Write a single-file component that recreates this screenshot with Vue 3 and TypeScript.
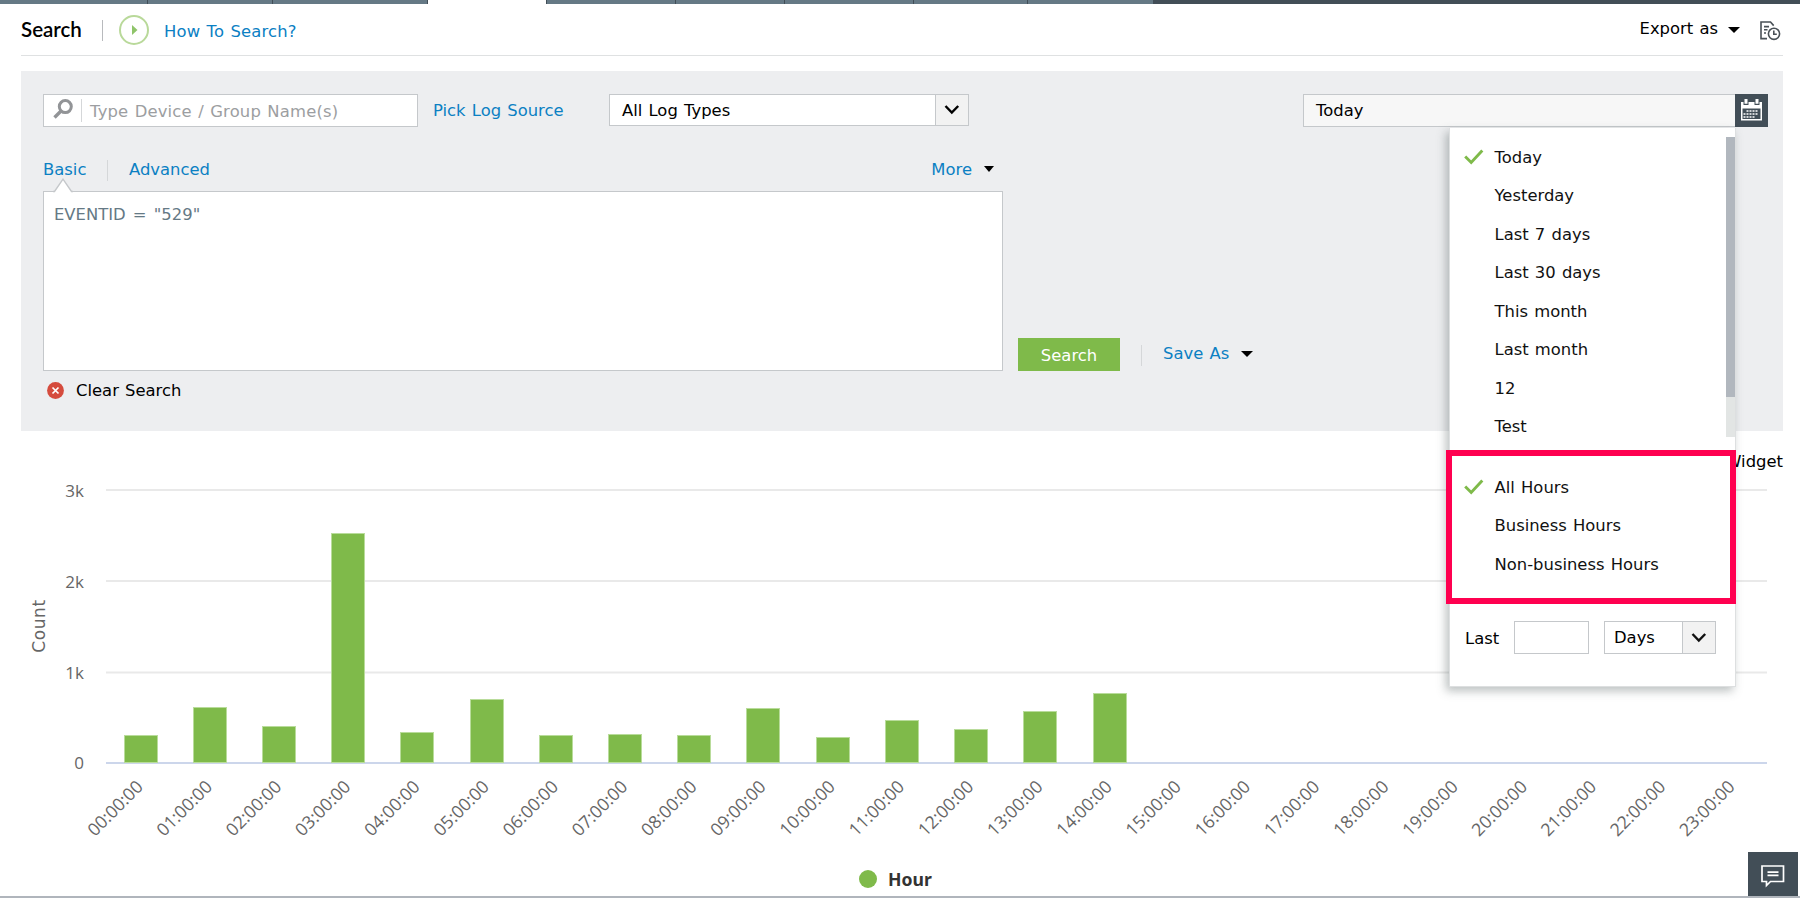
<script setup lang="ts">
import { computed, ref } from 'vue'
interface Bar {
  label: string
  height: number
}
const tabs = [148, 125, 155, 119, 129, 109, 129, 114, 126]
const activeTab = 3
const ranges = ['Today', 'Yesterday', 'Last 7 days', 'Last 30 days', 'This month', 'Last month', '12', 'Test']
const hours = ['All Hours', 'Business Hours', 'Non-business Hours']
const range = ref('Today')
const hour = ref('All Hours')
const query = ref('EVENTID = "529"')
const heights = [28, 56, 37, 230, 31, 64, 28, 29, 28, 55, 26, 43, 34, 52, 70]
const bars = computed<Bar[]>(() =>
  Array.from({ length: 24 }, (_, i) => ({
    label: `${String(i).padStart(2, '0')}:00:00`,
    height: heights[i] ?? 0
  }))
)
const grid = [
  { label: '3k', y: 30 },
  { label: '2k', y: 121 },
  { label: '1k', y: 212.5 }
]
const slot = 1661 / 24
const barX = (i: number) => Math.round(106 + slot * i + 17.6)
const labelX = (i: number) => 106 + slot * (i + 0.5) + 3.5
</script>
<template>
  <div class="page">
    <nav class="tabs">
      <span
        v-for="(w, i) in tabs"
        :key="i"
        class="tab"
        :class="{ active: i === activeTab }"
        :style="{ width: w + 'px' }"
      />
    </nav>
    <header class="head">
      <h1>Search</h1>
      <span class="sep" />
      <svg class="play" width="30" height="30" viewBox="0 0 30 30">
        <circle cx="15" cy="15" r="14" fill="#fff" stroke="#b9d99a" stroke-width="2" />
        <path d="M13 10l5.5 5-5.5 5z" fill="#8fc46a" />
      </svg>
      <a class="how">How To Search?</a>
      <span class="export">Export as</span>
      <span class="caret big" />
      <svg class="report" width="21" height="20" viewBox="0 0 21 20" fill="none" stroke="#4a5157" stroke-width="1.6">
        <path d="M7 17.6H1V1h9.5l3.2 3.6" />
        <path d="M4 5.6h5M4 8.8h3.5M4 12h2" />
        <circle cx="14" cy="12.8" r="5.6" />
        <path d="M13.8 9.6v3.6h3" />
      </svg>
    </header>
    <section class="panel">
      <div class="filters">
        <div class="device">
          <svg width="20" height="20" viewBox="0 0 20 20" fill="none" stroke="#929497">
            <circle cx="12.3" cy="7.6" r="6" stroke-width="3" />
            <path d="M8 12l-6.5 6.5" stroke-width="3.4" />
          </svg>
          <span class="bar-sep" />
          <span class="hint">Type Device / Group Name(s)</span>
        </div>
        <a class="pick">Pick Log Source</a>
        <div class="select types">
          <span class="value">All Log Types</span>
          <span class="arrow">
            <svg width="16" height="12" viewBox="0 0 16 12" fill="none" stroke="#000" stroke-width="2.4"><path d="M1.5 2l6.3 6.6L14.2 2" /></svg>
          </span>
        </div>
        <div class="date">
          <span class="value">{{ range }}</span>
          <span class="calendar">
            <svg width="21" height="22" viewBox="0 0 21 22">
              <path d="M0 3h21v18.5H0z" fill="#fff" />
              <path d="M1.5 9.5h18v10.5h-18z" fill="#424e57" />
              <path d="M2.5 0h5v6h-5zM13.5 0h5v6h-5z" fill="#424e57" />
              <path d="M3.5 0h3v4.7h-3zM14.5 0h3v4.7h-3z" fill="#fff" />
              <path d="M5.500 12h12M2.500 15h15M2.500 18h12" stroke="#fff" stroke-width="1.700" stroke-dasharray="2 1" />
            </svg>
          </span>
        </div>
      </div>
      <div class="modes">
        <a class="basic">Basic</a>
        <span class="mode-sep" />
        <a class="advanced">Advanced</a>
        <a class="more">More</a>
        <span class="caret" />
      </div>
      <div class="editor">
        <div class="query">
          <svg class="notch" width="20" height="15" viewBox="0 0 20 15">
            <path d="M1 14L10 1.2 19 14v1H1z" fill="#fff" />
            <path d="M0 13.5h1.5L10 1.2l8.5 12.3H20" fill="none" stroke="#c5c8cb" stroke-width="1.4" />
          </svg>
          {{ query }}
        </div>
        <button class="go">Search</button>
        <span class="save-sep" />
        <a class="save">Save As</a>
        <span class="caret big" />
      </div>
      <div class="clear">
        <svg width="17" height="17" viewBox="0 0 17 17">
          <circle cx="8.5" cy="8.5" r="8.4" fill="#d54b3d" />
          <path d="M5.5 5.5l6 6M11.5 5.5l-6 6" stroke="#fff" stroke-width="1.7" />
        </svg>
        <span>Clear Search</span>
      </div>
    </section>
    <div class="widget">Widget</div>
    <svg class="chart" width="1800" height="408" viewBox="0 0 1800 408">
      <g v-for="g in grid" :key="g.label">
        <rect x="106" :y="g.y - 1" width="1661" height="2" fill="#e9e9e9" />
        <text class="tick" x="84" :y="g.y + 6.5" text-anchor="end">{{ g.label }}</text>
      </g>
      <text class="tick" x="84" y="309" text-anchor="end">0</text>
      <rect x="106" y="302" width="1661" height="2" fill="#ccd6eb" />
      <text class="axis" transform="translate(45 166) rotate(-90)" text-anchor="middle">Count</text>
      <g v-for="(b, i) in bars" :key="b.label">
        <rect v-if="b.height" :x="barX(i) + 0.5" :y="303.5 - b.height" width="33" :height="b.height - 1" fill="#7fba4a" stroke="#b9dc9b" />
        <text class="tick hour" :transform="`translate(${labelX(i)} 328) rotate(-45)`" text-anchor="end">{{ b.label }}</text>
      </g>
    </svg>
    <footer class="legend">
      <span class="dot" />
      <span>Hour</span>
    </footer>
    <div class="menu">
      <div class="ranges">
        <div v-for="r in ranges" :key="r" class="item" @click="range = r">
          <svg v-if="r === range" class="tick-mark" width="20" height="16" viewBox="0 0 20 16"><path d="M1.2 7.5l6 6L18.3 1.5" /></svg>
          {{ r }}
        </div>
        <span class="track"><span class="thumb" /></span>
      </div>
      <div class="hours">
        <div v-for="h in hours" :key="h" class="item" @click="hour = h">
          <svg v-if="h === hour" class="tick-mark" width="20" height="16" viewBox="0 0 20 16"><path d="M1.2 7.5l6 6L18.3 1.5" /></svg>
          {{ h }}
        </div>
      </div>
      <div class="last">
        <span class="last-label">Last</span>
        <span class="amount" />
        <div class="select unit">
          <span class="value">Days</span>
          <span class="arrow">
            <svg width="16" height="12" viewBox="0 0 16 12" fill="none" stroke="#111" stroke-width="2.4"><path d="M1.5 2l6.3 6.6L14.2 2" /></svg>
          </span>
        </div>
      </div>
    </div>
    <div class="chat">
      <svg width="24" height="23" viewBox="0 0 24 23" fill="none" stroke="#fff" stroke-width="1.7">
        <path d="M1 1h21.500v15.500H9.500l-4 4v-4H1z" />
        <path d="M6.500 7.200h11M6.500 10.400h11" />
      </svg>
    </div>
  </div>
</template>

<style>
body {
  margin: 0;
  background: #fff;
}
</style>

<style scoped>
.page {
  position: relative;
  display: flex;
  flex-direction: column;
  box-sizing: border-box;
  width: 1800px;
  height: 898px;
  overflow: hidden;
  border-bottom: 2px solid #b0b5bc;
  font: 16.4px/20px "DejaVu Sans", Verdana, sans-serif;
  word-spacing: 1px;
  color: #000;
  white-space: nowrap;
}

a {
  color: #0b80c3;
}

.tabs {
  display: flex;
  flex: none;
  height: 4px;
  background: #424e57;
}

.tab {
  box-sizing: border-box;
  background: #657985;
  border-right: 1px solid #424e57;
}

.tab.active {
  background: #fff;
}

.head {
  display: flex;
  flex: none;
  align-items: flex-start;
  box-sizing: border-box;
  height: 52px;
  margin: 0 17px 0 21px;
  border-bottom: 1px solid #dfe1e2;
}

h1 {
  width: 81px;
  margin: 13px 0 0;
  font: 600 20.5px/24px Lato, sans-serif;
}

.sep {
  width: 1px;
  height: 21px;
  margin-top: 16px;
  background: #b8babd;
}

.play {
  margin: 11px 15px 0 16px;
}

.how {
  margin-top: 18px;
  letter-spacing: 0.15px;
}

.export {
  margin: 15px 10px 0 auto;
}

.caret {
  width: 0;
  height: 0;
  border: 5.5px solid transparent;
  border-top: 6px solid #000;
  border-bottom: 0;
}

.caret.big {
  border-width: 6.5px 6px 0;
}

.head .caret {
  margin-top: 23px;
}

.report {
  margin: 17px 2px 0 20px;
}

.panel {
  flex: none;
  box-sizing: border-box;
  height: 360px;
  margin: 15px 17px 0 21px;
  padding: 23px 15px 0 22px;
  background: #edeef0;
}

.filters {
  display: flex;
  height: 33px;
}

.device {
  display: flex;
  align-items: center;
  box-sizing: border-box;
  width: 375px;
  padding: 0 0 0 9px;
  background: #fff;
  border: 1px solid #c5c8cb;
}

.device svg {
  margin-top: -3px;
}

.bar-sep {
  width: 1px;
  height: 23px;
  margin: 0 8px;
  background: #d5d7d9;
}

.hint {
  padding-top: 2px;
  letter-spacing: 0.17px;
  color: #9c9ea1;
}

.pick {
  width: 176px;
  padding: 7px 0 0 15px;
  box-sizing: border-box;
}

.select {
  display: flex;
  box-sizing: border-box;
  background: #fff;
  border: 1px solid #c5c8cb;
}

.types {
  width: 360px;
  height: 32px;
  margin-left: 15px;
}

.select .value {
  flex: 1;
  padding: 6px 0 0 12px;
}

.arrow {
  display: flex;
  align-items: center;
  justify-content: center;
  width: 32px;
  background: #f2f2f2;
  border-left: 1px solid #c5c8cb;
}

.date {
  display: flex;
  width: 465px;
  margin-left: auto;
}

.date .value {
  flex: 1;
  padding: 6px 0 0 12px;
  background: #f7f7f7;
  border: 1px solid #c5c8cb;
  border-right: 0;
}

.calendar {
  display: flex;
  justify-content: center;
  width: 33px;
  padding-top: 5px;
  box-sizing: border-box;
  background: #424e57;
}

.modes {
  display: flex;
  align-items: flex-start;
  height: 64px;
}

.modes a {
  margin-top: 33px;
}

.basic {
  width: 64px;
}

.mode-sep,
.save-sep {
  width: 1px;
  height: 21px;
  background: #d5d7d9;
}

.mode-sep {
  margin: 33px 21px 0 0;
}

.modes .more {
  margin-left: auto;
}

.modes .caret {
  margin: 39px 774px 0 12px;
}

.editor {
  display: flex;
  align-items: flex-start;
  height: 180px;
}

.query {
  position: relative;
  box-sizing: border-box;
  width: 960px;
  height: 180px;
  padding: 13px 11px 0 10px;
  word-spacing: 2px;
  color: #657985;
  background: #fff;
  border: 1px solid #c5c8cb;
}

.notch {
  position: absolute;
  top: -14px;
  left: 9px;
}

.go {
  width: 102px;
  height: 33px;
  margin: 147px 21px 0 15px;
  padding: 2px 0 0;
  font: inherit;
  color: #fff;
  background: #7fba4a;
  border: 0;
}

.save-sep {
  margin-top: 154px;
}

.save {
  margin: 153px 12px 0 21px;
}

.editor .caret {
  margin-top: 160px;
}

.clear {
  display: flex;
  align-items: center;
  gap: 12px;
  margin: 10px 0 0 4px;
}

.clear svg {
  margin-top: -1px;
}

.widget {
  flex: none;
  height: 20px;
  margin: 21px 17px 0 0;
  text-align: right;
}

.chart {
  flex: none;
  margin-top: -12px;
}

.chart .tick {
  font: 17px "Open Sans", sans-serif;
  fill: #666;
}

.chart .hour {
  font-size: 17.6px;
}

.chart .axis {
  font: 17px "DejaVu Sans", sans-serif;
  letter-spacing: 0.6px;
  fill: #666;
}

.legend {
  display: flex;
  align-items: center;
  margin-left: 859px;
  font: 700 17.6px/22px "Noto Sans", sans-serif;
  color: #333;
}

.dot {
  width: 18px;
  height: 18px;
  margin: -1px 11px 0 0;
  border-radius: 50%;
  background: #7fba4a;
}

.menu {
  position: absolute;
  top: 128px;
  left: 1449px;
  box-sizing: border-box;
  width: 287px;
  height: 559px;
  background: #fff;
  border: 1px solid #dddfe0;
  border-top: 0;
  box-shadow: -3px 4px 9px rgba(60, 75, 75, 0.35);
}

.ranges {
  position: relative;
  height: 322px;
  padding-top: 11px;
  box-sizing: border-box;
}

.item {
  position: relative;
  height: 38.45px;
  padding-left: 44.5px;
  line-height: 38px;
  color: #111;
}

.tick-mark {
  position: absolute;
  top: 10px;
  left: 14px;
  fill: none;
  stroke: #7fba4a;
  stroke-width: 2.9;
}

.track {
  position: absolute;
  top: 9px;
  right: 0;
  width: 9px;
  height: 300px;
  background: #e2e5e4;
}

.thumb {
  display: block;
  height: 260px;
  background: #b1b7be;
}

.hours {
  box-sizing: border-box;
  width: 290px;
  height: 154px;
  margin-left: -4px;
  padding: 13px 0 0 1px;
  border: 6px solid #ff0050;
}

.hours .item {
  padding-left: 41.5px;
}

.hours .tick-mark {
  left: 11px;
}

.last {
  display: flex;
  padding: 17px 0 0 15px;
}

.last-label {
  width: 49px;
  padding-top: 8px;
}

.amount {
  box-sizing: border-box;
  width: 75px;
  height: 33px;
  margin-right: 15px;
  border: 1px solid #c5c8cb;
}

.unit {
  width: 112px;
  height: 33px;
}

.unit .value {
  padding-left: 9px;
}

.chat {
  position: absolute;
  right: 2px;
  bottom: 0;
  display: flex;
  justify-content: center;
  box-sizing: border-box;
  width: 50px;
  height: 44px;
  padding-top: 13px;
  background: #424e57;
}
</style>
